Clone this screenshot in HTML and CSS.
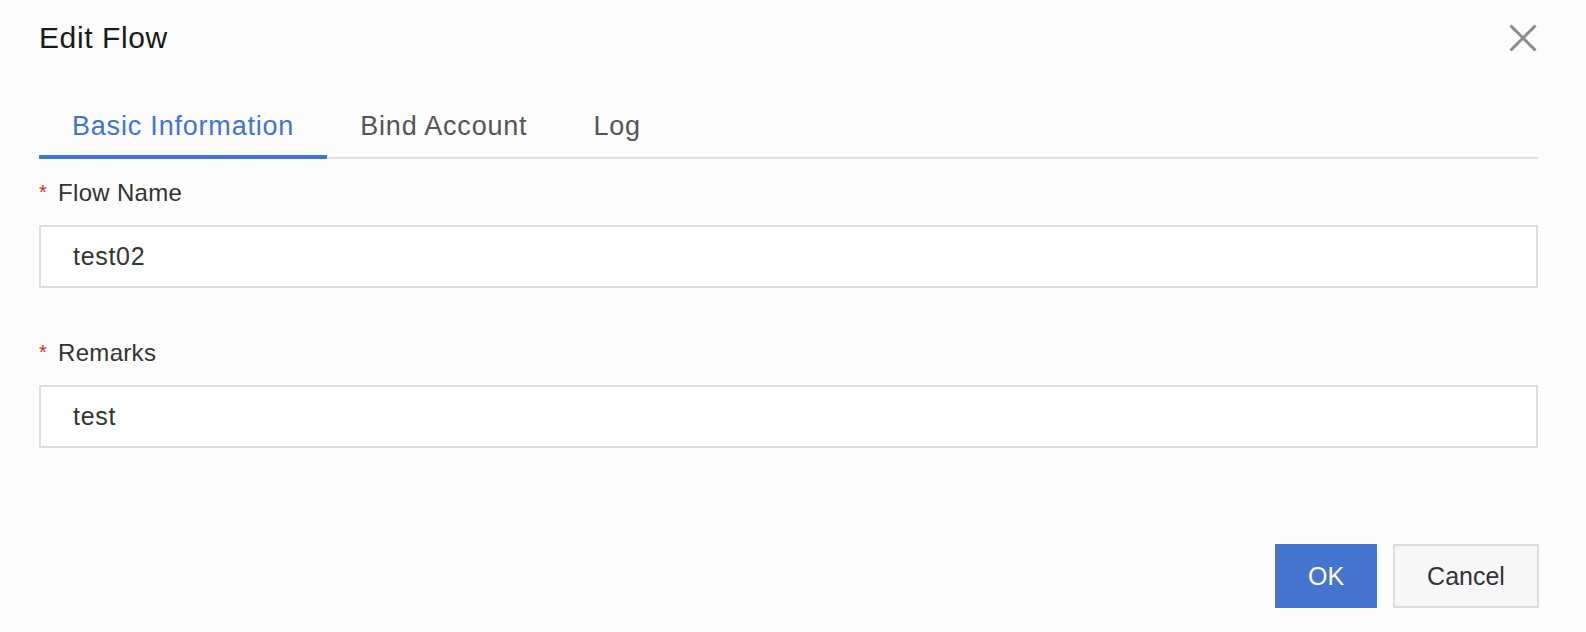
FILE: index.html
```html
<!DOCTYPE html>
<html lang="en">
<head>
<meta charset="utf-8">
<title>Edit Flow</title>
<link rel="stylesheet" href="styles.css">
</head>
<body>
<div class="dialog">
  <div class="header">
    <div class="title">Edit Flow</div>
    <button class="close" aria-label="Close">
      <svg width="28" height="28" viewBox="0 0 28 28"><path d="M1.5 1.5L26.5 26.5M26.5 1.5L1.5 26.5" stroke="#8a8a8a" stroke-width="3" fill="none"/></svg>
    </button>
  </div>
  <div class="tabs">
    <div class="tab active">Basic Information</div>
    <div class="tab">Bind Account</div>
    <div class="tab">Log</div>
  </div>
  <div class="form">
    <div class="item">
      <div class="label"><span class="req">*</span>Flow Name</div>
      <div class="input">test02</div>
    </div>
    <div class="item">
      <div class="label"><span class="req">*</span>Remarks</div>
      <div class="input">test</div>
    </div>
  </div>
  <div class="footer">
    <button class="btn primary">OK</button>
    <button class="btn">Cancel</button>
  </div>
</div>
</body>
</html>
```
FILE: styles.css
```css
html, body {
  margin: 0;
  padding: 0;
  background: #fcfcfc;
}
body {
  font-family: "Liberation Sans", Arial, sans-serif;
  color: #333;
}
.dialog {
  width: 1586px;
  height: 632px;
  box-sizing: border-box;
  padding: 18px 48px 0 39px;
}
.header {
  display: flex;
  justify-content: space-between;
  align-items: flex-start;
  height: 40px;
}
.title {
  font-size: 30px;
  line-height: 40px;
  color: #1a1a1a;
  letter-spacing: 0.6px;
}
.close {
  border: 0;
  background: none;
  padding: 0;
  margin: 6px 1px 0 0;
  width: 28px;
  height: 28px;
  cursor: pointer;
}
.close svg { display: block; }
.tabs {
  display: flex;
  margin-top: 43px;
  border-bottom: 2px solid #e1e1e1;
  height: 56px;
}
.tab {
  position: relative;
  padding: 7px 33px 0;
  font-size: 27px;
  line-height: 36px;
  color: #555;
  letter-spacing: 0.8px;
}
.tab.active {
  color: #3f74d4;
}
.tab.active::after {
  content: "";
  position: absolute;
  left: 0;
  right: 0;
  bottom: -2px;
  height: 4px;
  background: #3f74d4;
}
.form {
  padding-top: 18px;
}
.item {
  margin-bottom: 49px;
}
.label {
  font-size: 24px;
  line-height: 32px;
  color: #333;
  margin-bottom: 15px;
  letter-spacing: 0.3px;
}
.req {
  color: #e02020;
  font-size: 20px;
  margin-right: 11px;
  position: relative;
  top: -2px;
}
.input {
  height: 63px;
  box-sizing: border-box;
  border: 2px solid #dedede;
  background: #fff;
  padding-left: 32px;
  font-size: 25px;
  line-height: 59px;
  color: #333;
  letter-spacing: 0.7px;
}
.footer {
  display: flex;
  justify-content: flex-end;
  gap: 16px;
  margin-top: 96px;
  margin-right: -1px;
}
.btn {
  font-family: inherit;
  height: 64px;
  box-sizing: border-box;
  border: 2px solid #dcdcdc;
  background: #f7f7f7;
  color: #333;
  font-size: 25px;
  padding: 0;
  width: 146px;
  cursor: pointer;
}
.btn.primary {
  width: 102px;
  background: #4575d1;
  border-color: #4575d1;
  color: #fff;
}
```
